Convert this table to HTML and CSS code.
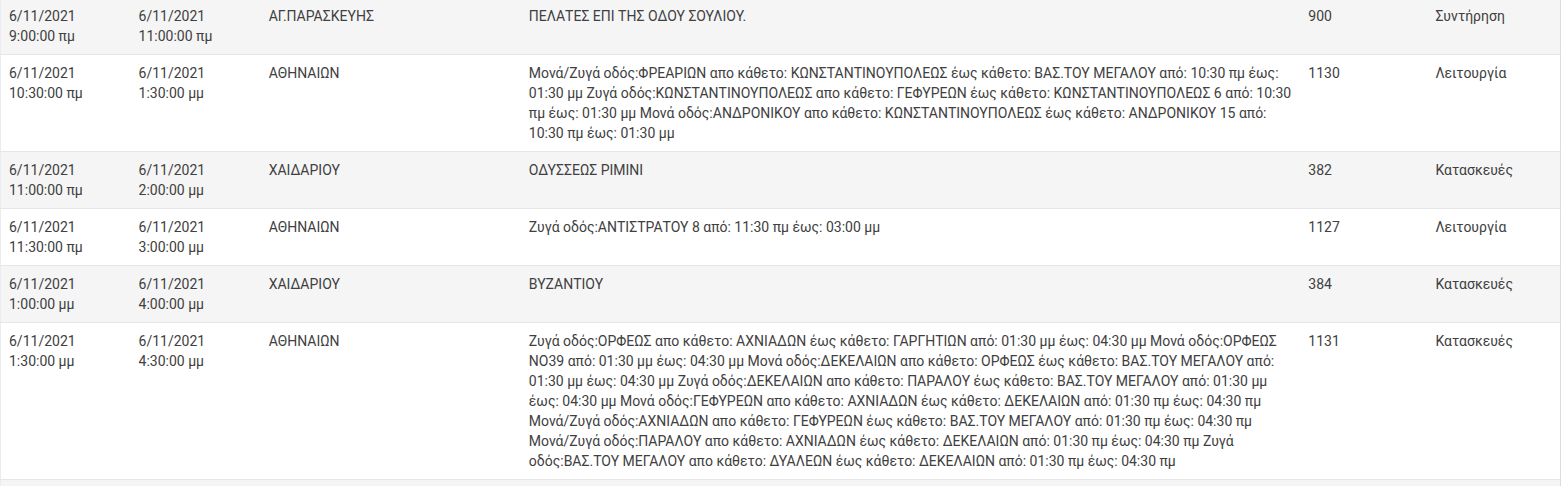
FILE: index.html
```html
<!doctype html>
<html>
  <head>
    <title>Διακοπές ρεύματος</title>
    <link rel="stylesheet" href="styles.css">
  </head>
  <body>
    <table id="outages">
      <colgroup>
        <col class="c_from">
        <col class="c_to">
        <col class="c_area">
        <col class="c_desc">
        <col class="c_num">
        <col class="c_reason">
      </colgroup>
      <tbody>
        <tr>
          <td>6/11/2021<br>9:00:00 πμ</td>
          <td>6/11/2021<br>11:00:00 πμ</td>
          <td>ΑΓ.ΠΑΡΑΣΚΕΥΗΣ</td>
          <td>ΠΕΛΑΤΕΣ ΕΠΙ ΤΗΣ ΟΔΟΥ ΣΟΥΛΙΟΥ.</td>
          <td>900</td>
          <td>Συντήρηση</td>
        </tr>
        <tr>
          <td>6/11/2021<br>10:30:00 πμ</td>
          <td>6/11/2021<br>1:30:00 μμ</td>
          <td>ΑΘΗΝΑΙΩΝ</td>
          <td>Μονά/Ζυγά οδός:ΦΡΕΑΡΙΩΝ απο κάθετο: ΚΩΝΣΤΑΝΤΙΝΟΥΠΟΛΕΩΣ έως κάθετο: ΒΑΣ.ΤΟΥ ΜΕΓΑΛΟΥ από: 10:30 πμ έως: 01:30 μμ Ζυγά οδός:ΚΩΝΣΤΑΝΤΙΝΟΥΠΟΛΕΩΣ απο κάθετο: ΓΕΦΥΡΕΩΝ έως κάθετο: ΚΩΝΣΤΑΝΤΙΝΟΥΠΟΛΕΩΣ 6 από: 10:30 πμ έως: 01:30 μμ Μονά οδός:ΑΝΔΡΟΝΙΚΟΥ απο κάθετο: ΚΩΝΣΤΑΝΤΙΝΟΥΠΟΛΕΩΣ έως κάθετο: ΑΝΔΡΟΝΙΚΟΥ 15 από: 10:30 πμ έως: 01:30 μμ</td>
          <td>1130</td>
          <td>Λειτουργία</td>
        </tr>
        <tr>
          <td>6/11/2021<br>11:00:00 πμ</td>
          <td>6/11/2021<br>2:00:00 μμ</td>
          <td>ΧΑΙΔΑΡΙΟΥ</td>
          <td>ΟΔΥΣΣΕΩΣ ΡΙΜΙΝΙ</td>
          <td>382</td>
          <td>Κατασκευές</td>
        </tr>
        <tr>
          <td>6/11/2021<br>11:30:00 πμ</td>
          <td>6/11/2021<br>3:00:00 μμ</td>
          <td>ΑΘΗΝΑΙΩΝ</td>
          <td>Ζυγά οδός:ΑΝΤΙΣΤΡΑΤΟΥ 8 από: 11:30 πμ έως: 03:00 μμ</td>
          <td>1127</td>
          <td>Λειτουργία</td>
        </tr>
        <tr>
          <td>6/11/2021<br>1:00:00 μμ</td>
          <td>6/11/2021<br>4:00:00 μμ</td>
          <td>ΧΑΙΔΑΡΙΟΥ</td>
          <td>ΒΥΖΑΝΤΙΟΥ</td>
          <td>384</td>
          <td>Κατασκευές</td>
        </tr>
        <tr>
          <td>6/11/2021<br>1:30:00 μμ</td>
          <td>6/11/2021<br>4:30:00 μμ</td>
          <td>ΑΘΗΝΑΙΩΝ</td>
          <td>Ζυγά οδός:ΟΡΦΕΩΣ απο κάθετο: ΑΧΝΙΑΔΩΝ έως κάθετο: ΓΑΡΓΗΤΙΩΝ από: 01:30 μμ έως: 04:30 μμ Μονά οδός:ΟΡΦΕΩΣ ΝΟ39 από: 01:30 μμ έως: 04:30 μμ Μονά οδός:ΔΕΚΕΛΑΙΩΝ απο κάθετο: ΟΡΦΕΩΣ έως κάθετο: ΒΑΣ.ΤΟΥ ΜΕΓΑΛΟΥ από: 01:30 μμ έως: 04:30 μμ Ζυγά οδός:ΔΕΚΕΛΑΙΩΝ απο κάθετο: ΠΑΡΑΛΟΥ έως κάθετο: ΒΑΣ.ΤΟΥ ΜΕΓΑΛΟΥ από: 01:30 μμ έως: 04:30 μμ Μονά οδός:ΓΕΦΥΡΕΩΝ απο κάθετο: ΑΧΝΙΑΔΩΝ έως κάθετο: ΔΕΚΕΛΑΙΩΝ από: 01:30 πμ έως: 04:30 πμ Μονά/Ζυγά οδός:ΑΧΝΙΑΔΩΝ απο κάθετο: ΓΕΦΥΡΕΩΝ έως κάθετο: ΒΑΣ.ΤΟΥ ΜΕΓΑΛΟΥ από: 01:30 πμ έως: 04:30 πμ Μονά/Ζυγά οδός:ΠΑΡΑΛΟΥ απο κάθετο: ΑΧΝΙΑΔΩΝ έως κάθετο: ΔΕΚΕΛΑΙΩΝ από: 01:30 πμ έως: 04:30 πμ Ζυγά οδός:ΒΑΣ.ΤΟΥ ΜΕΓΑΛΟΥ απο κάθετο: ΔΥΑΛΕΩΝ έως κάθετο: ΔΕΚΕΛΑΙΩΝ από: 01:30 πμ έως: 04:30 πμ</td>
          <td>1131</td>
          <td>Κατασκευές</td>
        </tr>
        <tr class="filler">
          <td></td>
          <td></td>
          <td></td>
          <td></td>
          <td></td>
          <td></td>
        </tr>
      </tbody>
    </table>
  </body>
</html>
```

FILE: styles.css
```css
body {
  margin: 0;
  background-color: #fff;
  font-family: Roboto, "Noto Sans", sans-serif;
  font-size: 14px;
  color: #404040;
}

#outages {
  width: 1561px;
  margin-top: -2px;
  border-collapse: collapse;
  table-layout: fixed;
  border-left: 1px solid #ececec;
  border-right: 1px solid #dcdcdc;
}

.c_from { width: 130px; }
.c_to { width: 130px; }
.c_area { width: 260px; }
.c_desc { width: 779px; }
.c_num { width: 127px; }
.c_reason { width: 133px; }

#outages td {
  padding: 8px;
  line-height: 20px;
  vertical-align: top;
  text-align: left;
  border-bottom: 1px solid #e6e6e6;
}

#outages tr:nth-child(odd) {
  background-color: #f5f5f5;
}

#outages .filler td {
  height: 40px;
}
```
